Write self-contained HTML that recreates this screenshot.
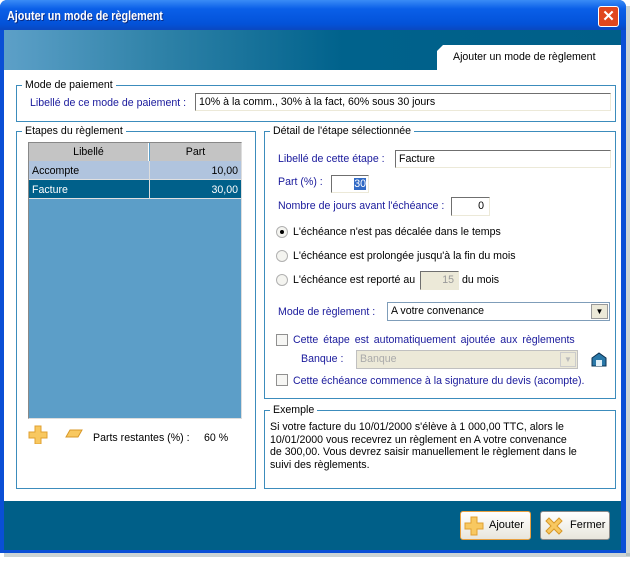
<!DOCTYPE html>
<html><head><meta charset="utf-8"><style>
*{margin:0;padding:0;box-sizing:border-box}
body{width:634px;height:561px;background:#fff;font-family:"Liberation Sans",sans-serif;font-size:10.6px;color:#000;position:relative;overflow:hidden}
.a{position:absolute}
.blue{color:#1a1a9c}
.grp{position:absolute;border:1px solid #3c8cbc}
.lg{position:absolute;background:#fff;padding:0 3px;top:-8px;left:5px;line-height:14px}
.inp{position:absolute;background:#fff;border:1px solid #7f9db9;border-top-color:#6f6f6f;border-left-color:#6f6f6f;border-right-color:#ece9d8;border-bottom-color:#ece9d8;line-height:16px;padding-left:3px}
.rad{position:absolute;width:12px;height:12px;border-radius:50%;border:1px solid #b0b0b0;background:#f4f4f0}
.chk{position:absolute;width:12px;height:12px;border:1px solid #909090;background:#f6f6f4}
.btn{position:absolute;border:1px solid #8a8a8a;border-radius:3px;background:linear-gradient(#fff,#e8e6dc);height:29px;font-size:11px}
</style></head><body>
<div class="a" style="left:0;top:0;width:626px;height:553px;background:#0a4fd6;border-radius:7px 7px 0 0"></div>
<div class="a" style="left:626px;top:6px;width:4px;height:550px;background:#9aa;opacity:.5"></div>
<div class="a" style="left:4px;top:553px;width:626px;height:4px;background:#9aa;opacity:.5"></div>
<div class="a" style="left:0;top:0;width:626px;height:30px;border-radius:7px 7px 0 0;background:linear-gradient(#3a8cf6,#0a5fe8 30%,#0352d8 80%,#0a48c0)"></div>
<div class="a" style="left:7px;top:8px;color:#fff;font-weight:bold;font-size:13px;text-shadow:1px 1px #0a2a80;transform:scaleX(0.83);transform-origin:0 0;white-space:nowrap">Ajouter un mode de règlement</div>
<div class="a" style="left:598px;top:6px;width:21px;height:21px;border:1px solid #fff;border-radius:3px;background:#e0461e;color:#fff;font-weight:bold;font-size:15px;text-align:center;line-height:19px">✕</div>
<div class="a" style="left:4px;top:30px;width:617px;height:40px;background:linear-gradient(90deg,#5da0c8,#2f82a8 25%,#00628c 55%,#005f88)"></div>
<div class="a" style="left:437px;top:45px;width:184px;height:25px;background:#fff;clip-path:polygon(6px 0,100% 0,100% 100%,0 100%,0 6px)"></div>
<div class="a" style="left:453px;top:51px">Ajouter un mode de règlement</div>
<div class="a" style="left:4px;top:70px;width:617px;height:431px;background:#fff"></div>
<div class="grp" style="left:16px;top:85px;width:600px;height:37px"><span class="lg">Mode de paiement</span></div>
<div class="a blue" style="left:30px;top:97px">Libellé de ce mode de paiement :</div>
<div class="inp" style="left:195px;top:93px;width:416px;height:18px">10% à la comm., 30% à la fact, 60% sous 30 jours</div>
<div class="grp" style="left:16px;top:131px;width:240px;height:358px"><span class="lg">Etapes du règlement</span></div>
<div class="a" style="left:28px;top:142px;width:214px;height:277px;background:#5c9ec8;border:1px solid #888;border-right-color:#ddd;border-bottom-color:#ddd"></div>
<div class="a" style="left:29px;top:143px;width:120px;height:18px;background:#c4c4c4;border-right:1px solid #fff;text-align:center;line-height:18px">Libellé</div>
<div class="a" style="left:150px;top:143px;width:91px;height:18px;background:#c4c4c4;text-align:center;line-height:18px">Part</div>
<div class="a" style="left:29px;top:161px;width:212px;height:19px;background:#b0c4de;border-bottom:1px solid #e0e0e0"></div>
<div class="a" style="left:149px;top:161px;width:1px;height:38px;background:#ddd"></div>
<div class="a" style="left:32px;top:165px">Accompte</div><div class="a" style="left:150px;top:165px;width:88px;text-align:right">10,00</div>
<div class="a" style="left:29px;top:180px;width:212px;height:19px;background:#00608a;border-bottom:1px solid #e0e0e0"></div>
<div class="a" style="left:149px;top:180px;width:1px;height:19px;background:#ddd"></div>
<div class="a" style="left:32px;top:184px;color:#fff">Facture</div><div class="a" style="left:150px;top:184px;width:88px;text-align:right;color:#fff">30,00</div>
<svg class="a" style="left:28px;top:424px" width="56" height="20"><path d="M7 2h6v6h6v6h-6v6H7v-6H1V8h6z" fill="#f8c860" stroke="#e0a030"/><path d="M38 13l4-7h12l-4 7z" fill="#f8c860" stroke="#d89828"/></svg>
<div class="a" style="left:93px;top:432px">Parts restantes (%) :</div>
<div class="a" style="left:204px;top:432px">60 %</div>
<div class="grp" style="left:264px;top:131px;width:352px;height:268px"><span class="lg">Détail de l'étape sélectionnée</span></div>
<div class="a blue" style="left:278px;top:153px">Libellé de cette étape :</div>
<div class="inp" style="left:395px;top:150px;width:216px;height:18px">Facture</div>
<div class="a blue" style="left:278px;top:176px">Part (%) :</div>
<div class="inp" style="left:331px;top:175px;width:38px;height:18px;text-align:right;padding-right:2px"><span style="background:#316ac5;color:#fff">30</span></div>
<div class="a blue" style="left:278px;top:200px">Nombre de jours avant l'échéance :</div>
<div class="inp" style="left:451px;top:197px;width:39px;height:19px;text-align:right;padding-right:5px">0</div>
<div class="rad" style="left:276px;top:226px"><div style="position:absolute;left:3px;top:3px;width:4px;height:4px;border-radius:50%;background:#000"></div></div>
<div class="a" style="left:293px;top:226px">L'échéance n'est pas décalée dans le temps</div>
<div class="rad" style="left:276px;top:250px"></div>
<div class="a" style="left:293px;top:250px">L'échéance est prolongée jusqu'à la fin du mois</div>
<div class="rad" style="left:276px;top:274px"></div>
<div class="a" style="left:293px;top:274px">L'échéance est reporté au</div>
<div class="inp" style="left:420px;top:271px;width:39px;height:19px;background:#ece9d8;color:#999;text-align:right;padding-right:4px">15</div>
<div class="a" style="left:462px;top:274px">du mois</div>
<div class="a blue" style="left:278px;top:306px">Mode de règlement :</div>
<div class="inp" style="left:387px;top:302px;width:223px;height:19px;border-color:#7f9db9">A votre convenance</div>
<div class="a" style="left:591px;top:304px;width:17px;height:15px;background:#ece9d8;border:1px solid #999;font-size:8px;text-align:center;line-height:14px">▼</div>
<div class="chk" style="left:276px;top:334px"></div>
<div class="a blue" style="left:293px;top:334px;word-spacing:2px">Cette étape est automatiquement ajoutée aux règlements</div>
<div class="a blue" style="left:301px;top:353px">Banque :</div>
<div class="inp" style="left:356px;top:350px;width:222px;height:19px;background:#ece9d8;color:#aaa;border-color:#c0c0c0">Banque</div>
<div class="a" style="left:560px;top:352px;width:16px;height:15px;background:#ece9d8;border:1px solid #ccc;color:#bbb;font-size:8px;text-align:center;line-height:14px">▼</div>
<svg class="a" style="left:590px;top:351px" width="18" height="17"><path d="M2 7l7-5 7 5v8H2z" fill="#2a78a8" stroke="#0a3050"/><rect x="6" y="9" width="6" height="6" fill="#e0f0f8"/></svg>
<div class="chk" style="left:276px;top:374px"></div>
<div class="a blue" style="left:293px;top:375px">Cette échéance commence à la signature du devis (acompte).</div>
<div class="grp" style="left:264px;top:410px;width:352px;height:79px"><span class="lg">Exemple</span></div>
<div class="a" style="left:270px;top:421px;line-height:12.5px;width:340px">Si votre facture du 10/01/2000 s'élève à 1 000,00 TTC, alors le<br>10/01/2000 vous recevrez un règlement en A votre convenance<br>de 300,00. Vous devrez saisir manuellement le règlement dans le<br>suivi des règlements.</div>
<div class="a" style="left:4px;top:501px;width:617px;height:49px;background:#005f88"></div>
<div class="btn" style="left:460px;top:511px;width:71px;border-color:#e8a040"><svg class="a" style="left:3px;top:4px" width="20" height="20"><path d="M7 1h6v6h6v6h-6v6H7v-6H1V7h6z" fill="#f8c860" stroke="#e0a030"/></svg><span class="a" style="left:28px;top:7px">Ajouter</span></div>
<div class="btn" style="left:540px;top:511px;width:70px"><svg class="a" style="left:3px;top:4px" width="20" height="20"><path d="M2 5l3-3 5 5 5-5 3 3-5 5 5 5-3 3-5-5-5 5-3-3 5-5z" fill="#f8c860" stroke="#d89828"/></svg><span class="a" style="left:29px;top:7px">Fermer</span></div>
</body></html>
